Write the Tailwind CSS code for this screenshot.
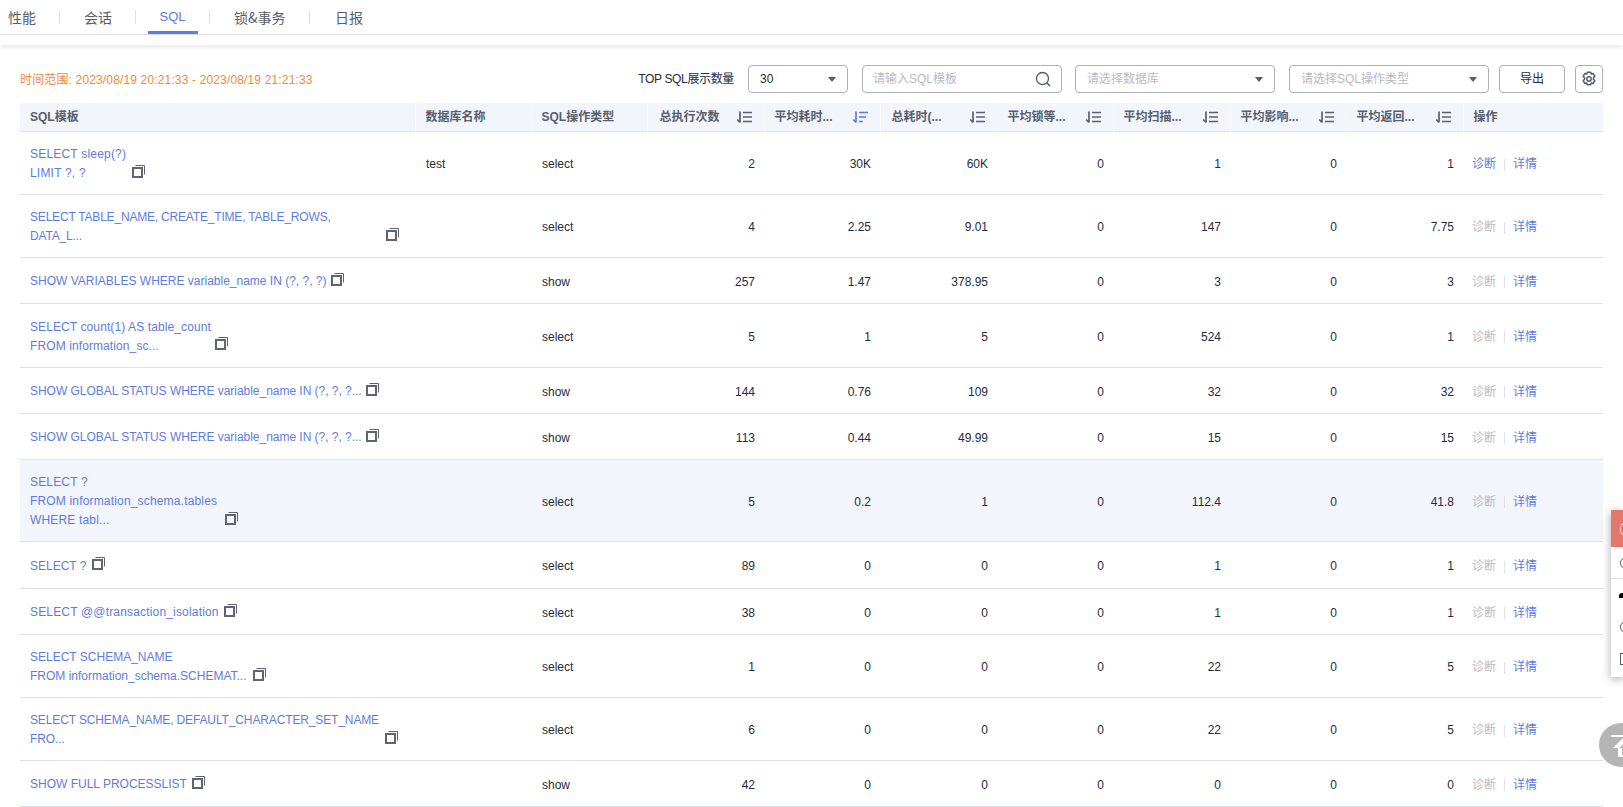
<!DOCTYPE html>
<html lang="zh">
<head>
<meta charset="utf-8">
<script src="https://cdn.jsdelivr.net/npm/@tailwindcss/browser@4"></script>
</head>
<body class="h-[807px] w-[1623px] overflow-hidden bg-white text-xs text-[#252b3a] font-['Liberation_Sans','Noto_Sans_CJK_SC',sans-serif]">
<svg class="hidden">
  <symbol id="sort" viewBox="0 0 16 12"><path d="M4 .5v11M1.200 8.500 4 11.300M7 1.500h9M7 6h9M7 10.500h9" fill="none" stroke="#5b6070" stroke-width="1.700"/></symbol>
  <symbol id="sort-on" viewBox="0 0 16 12"><path d="M4 .5v11M1.200 8.500 4 11.300M7 1.500h9M7 6h7M7 10.500h4" fill="none" stroke="#5e7ce0" stroke-width="1.700"/></symbol>
  <symbol id="copy" viewBox="0 0 14 14"><rect x="1" y="4" width="9" height="9" fill="none" stroke="#5f6470" stroke-width="2"/><path d="M3.500 1.500h9v9" fill="none" stroke="#5f6470" stroke-width="1"/></symbol>
</svg>

<nav class="flex h-[35px] items-center border-b border-[#dfe1e6] text-sm text-[#575d6c] font-['Noto_Sans_CJK_SC',sans-serif]">
  <a class="w-[59px] pl-2">性能</a><span class="h-[14px] w-px bg-[#dfe1e6]"></span>
  <a class="w-[75px] pl-6">会话</a><span class="h-[14px] w-px bg-[#dfe1e6]"></span>
  <a class="relative flex h-full w-[73px] items-center justify-center text-[13px] text-[#5e7ce0] font-['Liberation_Sans',sans-serif]">SQL<span class="absolute bottom-0 left-3 right-[11px] h-[3px] bg-[#5e7ce0]"></span></a><span class="h-[14px] w-px bg-[#dfe1e6]"></span>
  <a class="w-[99px] pl-6">锁&amp;事务</a><span class="h-[14px] w-px bg-[#dfe1e6]"></span>
  <a class="pl-[25px]">日报</a>
</nav>
<div class="h-[10px] bg-white shadow-[0_2px_4px_rgba(0,0,0,0.10)]"></div>

<main class="px-5 pt-5">
  <div class="flex h-[28px] items-center">
    <span class="translate-y-px tracking-[0.15px] text-[#f08a3c]">时间范围: 2023/08/19 20:21:33 - 2023/08/19 21:21:33</span>
    <span class="ml-auto mr-[14px] tracking-[-0.35px]">TOP SQL展示数量</span>
    <div class="mr-[14px] flex h-full w-[100px] items-center justify-between rounded-sm border border-[#adb0b8] pl-[11px] pr-[11px]">30<svg class="h-[5px] w-[8px]" viewBox="0 0 8 5"><path d="M0 0h8L4 5z" fill="#575d6c"/></svg></div>
    <div class="mr-[13px] flex h-full w-[200px] items-center justify-between rounded-sm border border-[#adb0b8] pl-[10px] pr-[10px] text-[#b8bac0]">请输入SQL模板<svg class="h-4 w-4" viewBox="0 0 16 16"><circle cx="7.500" cy="7.500" r="6" fill="none" stroke="#575d6c" stroke-width="1.300"/><path d="m12 12 3 3" stroke="#575d6c" stroke-width="1.500"/></svg></div>
    <div class="mr-[14px] flex h-full w-[200px] items-center justify-between rounded-sm border border-[#adb0b8] pl-[11px] pr-[11px] text-[#b8bac0]">请选择数据库<svg class="h-[5px] w-[8px]" viewBox="0 0 8 5"><path d="M0 0h8L4 5z" fill="#575d6c"/></svg></div>
    <div class="mr-[10px] flex h-full w-[200px] items-center justify-between rounded-sm border border-[#adb0b8] pl-[11px] pr-[11px] text-[#b8bac0]">请选择SQL操作类型<svg class="h-[5px] w-[8px]" viewBox="0 0 8 5"><path d="M0 0h8L4 5z" fill="#575d6c"/></svg></div>
    <button class="mr-[10px] flex h-full w-[66px] items-center justify-center rounded-sm border border-[#adb0b8]">导出</button>
    <button class="flex h-full w-[28px] items-center justify-center rounded-sm border border-[#adb0b8]"><svg class="h-4 w-4" viewBox="0 0 16 16" fill="none" stroke="#575d6c" stroke-width="1.500"><path d="M6.300 1.200h3.400l.5 1.800 1.900-.5 1.700 2.900-1.400 1.400v1.400l1.400 1.400-1.700 2.900-1.900-.5-.5 1.800H6.300l-.5-1.800-1.900.5-1.700-2.900 1.400-1.400V6.800L2.200 5.400l1.700-2.900 1.900.5z" stroke-linejoin="round"/><circle cx="8" cy="8" r="2.200"/></svg></button>
  </div>

  <table class="mt-[10px] w-[1583px] table-fixed">
    <colgroup>
      <col class="w-[395px]"><col class="w-[116px]"><col class="w-[116px]"><col class="w-[117px]"><col class="w-[116px]"><col class="w-[117px]"><col class="w-[116px]"><col class="w-[117px]"><col class="w-[116px]"><col class="w-[117px]"><col>
    </colgroup>
    <thead class="bg-[#f2f5fc] text-[#575d6c] [&_th]:pt-px">
      <tr class="h-[28px] border-b border-[#dfe1e6]">
        <th class="border-r border-white pl-[10px] text-left">SQL模板</th>
        <th class="border-r border-white pl-[10px] text-left">数据库名称</th>
        <th class="border-r border-white pl-[10px] text-left">SQL操作类型</th>
        <th class="border-r border-white pl-3 pr-3 text-left"><div class="flex items-center justify-between">总执行次数<svg class="h-3 w-4"><use href="#sort"/></svg></div></th>
        <th class="border-r border-white pl-[10px] pr-3 text-left"><div class="flex items-center justify-between">平均耗时...<svg class="h-3 w-4"><use href="#sort-on"/></svg></div></th>
        <th class="border-r border-white pl-[11px] pr-3 text-left"><div class="flex items-center justify-between">总耗时(...<svg class="h-3 w-4"><use href="#sort"/></svg></div></th>
        <th class="border-r border-white pl-[10px] pr-3 text-left"><div class="flex items-center justify-between">平均锁等...<svg class="h-3 w-4"><use href="#sort"/></svg></div></th>
        <th class="border-r border-white pl-[10px] pr-3 text-left"><div class="flex items-center justify-between">平均扫描...<svg class="h-3 w-4"><use href="#sort"/></svg></div></th>
        <th class="border-r border-white pl-[10px] pr-3 text-left"><div class="flex items-center justify-between">平均影响...<svg class="h-3 w-4"><use href="#sort"/></svg></div></th>
        <th class="border-r border-white pl-[10px] pr-3 text-left"><div class="flex items-center justify-between">平均返回...<svg class="h-3 w-4"><use href="#sort"/></svg></div></th>
        <th class="pl-[10px] text-left">操作</th>
      </tr>
    </thead>
    <tbody class="[&_td]:pr-[9px] [&_td]:pt-[3px] [&_td]:text-right">
      <tr class="h-[63px] border-b border-[#dfe1e6]">
        <td class="!text-left pl-[10px] leading-[19px] text-[#5e7ce0] tracking-[0.2px]">SELECT sleep(?)<br>LIMIT ?, ?<svg class="ml-[46px] inline-block h-[14px] w-[14px] -translate-y-[3px]"><use href="#copy"/></svg></td>
        <td class="!text-left pl-[11px]">test</td><td class="!text-left pl-[11px]">select</td>
        <td>2</td><td>30K</td><td>60K</td><td>0</td><td>1</td><td>0</td><td>1</td>
        <td class="!text-left pl-[9px]"><span class="text-[#5e7ce0]">诊断</span><span class="mx-2 inline-block h-[12px] w-px bg-[#dfe1e6] align-middle"></span><span class="text-[#5e7ce0]">详情</span></td>
      </tr>
      <tr class="h-[63px] border-b border-[#dfe1e6]">
        <td class="!text-left pl-[10px] leading-[19px] text-[#5e7ce0] tracking-[-0.19px]">SELECT TABLE_NAME, CREATE_TIME, TABLE_ROWS,<br>DATA_L...<svg class="ml-[304px] inline-block h-[14px] w-[14px] -translate-y-[3px]"><use href="#copy"/></svg></td>
        <td class="!text-left pl-[11px]"></td><td class="!text-left pl-[11px]">select</td>
        <td>4</td><td>2.25</td><td>9.01</td><td>0</td><td>147</td><td>0</td><td>7.75</td>
        <td class="!text-left pl-[9px]"><span class="text-[#bbbbbb]">诊断</span><span class="mx-2 inline-block h-[12px] w-px bg-[#dfe1e6] align-middle"></span><span class="text-[#5e7ce0]">详情</span></td>
      </tr>
      <tr class="h-[46px] border-b border-[#dfe1e6]">
        <td class="!text-left pl-[10px] leading-[19px] text-[#5e7ce0]">SHOW VARIABLES WHERE variable_name IN (?, ?, ?)<svg class="ml-[4px] inline-block h-[14px] w-[14px] -translate-y-[3px]"><use href="#copy"/></svg></td>
        <td class="!text-left pl-[11px]"></td><td class="!text-left pl-[11px]">show</td>
        <td>257</td><td>1.47</td><td>378.95</td><td>0</td><td>3</td><td>0</td><td>3</td>
        <td class="!text-left pl-[9px]"><span class="text-[#bbbbbb]">诊断</span><span class="mx-2 inline-block h-[12px] w-px bg-[#dfe1e6] align-middle"></span><span class="text-[#5e7ce0]">详情</span></td>
      </tr>
      <tr class="h-[64px] border-b border-[#dfe1e6]">
        <td class="!text-left pl-[10px] leading-[19px] text-[#5e7ce0] tracking-[0.1px]">SELECT count(1) AS table_count<br>FROM information_sc...<svg class="ml-[56px] inline-block h-[14px] w-[14px] -translate-y-[3px]"><use href="#copy"/></svg></td>
        <td class="!text-left pl-[11px]"></td><td class="!text-left pl-[11px]">select</td>
        <td>5</td><td>1</td><td>5</td><td>0</td><td>524</td><td>0</td><td>1</td>
        <td class="!text-left pl-[9px]"><span class="text-[#bbbbbb]">诊断</span><span class="mx-2 inline-block h-[12px] w-px bg-[#dfe1e6] align-middle"></span><span class="text-[#5e7ce0]">详情</span></td>
      </tr>
      <tr class="h-[46px] border-b border-[#dfe1e6]">
        <td class="!text-left pl-[10px] leading-[19px] text-[#5e7ce0] tracking-[-0.03px]">SHOW GLOBAL STATUS WHERE variable_name IN (?, ?, ?...<svg class="ml-[4px] inline-block h-[14px] w-[14px] -translate-y-[3px]"><use href="#copy"/></svg></td>
        <td class="!text-left pl-[11px]"></td><td class="!text-left pl-[11px]">show</td>
        <td>144</td><td>0.76</td><td>109</td><td>0</td><td>32</td><td>0</td><td>32</td>
        <td class="!text-left pl-[9px]"><span class="text-[#bbbbbb]">诊断</span><span class="mx-2 inline-block h-[12px] w-px bg-[#dfe1e6] align-middle"></span><span class="text-[#5e7ce0]">详情</span></td>
      </tr>
      <tr class="h-[46px] border-b border-[#dfe1e6]">
        <td class="!text-left pl-[10px] leading-[19px] text-[#5e7ce0] tracking-[-0.03px]">SHOW GLOBAL STATUS WHERE variable_name IN (?, ?, ?...<svg class="ml-[4px] inline-block h-[14px] w-[14px] -translate-y-[3px]"><use href="#copy"/></svg></td>
        <td class="!text-left pl-[11px]"></td><td class="!text-left pl-[11px]">show</td>
        <td>113</td><td>0.44</td><td>49.99</td><td>0</td><td>15</td><td>0</td><td>15</td>
        <td class="!text-left pl-[9px]"><span class="text-[#bbbbbb]">诊断</span><span class="mx-2 inline-block h-[12px] w-px bg-[#dfe1e6] align-middle"></span><span class="text-[#5e7ce0]">详情</span></td>
      </tr>
      <tr class="h-[82px] border-b border-[#dfe1e6] bg-[#f2f5fc]">
        <td class="!text-left pl-[10px] leading-[19px] text-[#5e7ce0] tracking-[0.17px]">SELECT ?<br>FROM information_schema.tables<br>WHERE tabl...<svg class="ml-[115px] inline-block h-[14px] w-[14px] -translate-y-[3px]"><use href="#copy"/></svg></td>
        <td class="!text-left pl-[11px]"></td><td class="!text-left pl-[11px]">select</td>
        <td>5</td><td>0.2</td><td>1</td><td>0</td><td>112.4</td><td>0</td><td>41.8</td>
        <td class="!text-left pl-[9px]"><span class="text-[#bbbbbb]">诊断</span><span class="mx-2 inline-block h-[12px] w-px bg-[#dfe1e6] align-middle"></span><span class="text-[#5e7ce0]">详情</span></td>
      </tr>
      <tr class="h-[47px] border-b border-[#dfe1e6]">
        <td class="!text-left pl-[10px] leading-[19px] text-[#5e7ce0]">SELECT ?<svg class="ml-[6px] inline-block h-[14px] w-[14px] -translate-y-[3px]"><use href="#copy"/></svg></td>
        <td class="!text-left pl-[11px]"></td><td class="!text-left pl-[11px]">select</td>
        <td>89</td><td>0</td><td>0</td><td>0</td><td>1</td><td>0</td><td>1</td>
        <td class="!text-left pl-[9px]"><span class="text-[#bbbbbb]">诊断</span><span class="mx-2 inline-block h-[12px] w-px bg-[#dfe1e6] align-middle"></span><span class="text-[#5e7ce0]">详情</span></td>
      </tr>
      <tr class="h-[46px] border-b border-[#dfe1e6]">
        <td class="!text-left pl-[10px] leading-[19px] text-[#5e7ce0] tracking-[0.17px]">SELECT @@transaction_isolation<svg class="ml-[5px] inline-block h-[14px] w-[14px] -translate-y-[3px]"><use href="#copy"/></svg></td>
        <td class="!text-left pl-[11px]"></td><td class="!text-left pl-[11px]">select</td>
        <td>38</td><td>0</td><td>0</td><td>0</td><td>1</td><td>0</td><td>1</td>
        <td class="!text-left pl-[9px]"><span class="text-[#bbbbbb]">诊断</span><span class="mx-2 inline-block h-[12px] w-px bg-[#dfe1e6] align-middle"></span><span class="text-[#5e7ce0]">详情</span></td>
      </tr>
      <tr class="h-[63px] border-b border-[#dfe1e6]">
        <td class="!text-left pl-[10px] leading-[19px] text-[#5e7ce0]">SELECT SCHEMA_NAME<br>FROM information_schema.SCHEMAT...<svg class="ml-[6px] inline-block h-[14px] w-[14px] -translate-y-[3px]"><use href="#copy"/></svg></td>
        <td class="!text-left pl-[11px]"></td><td class="!text-left pl-[11px]">select</td>
        <td>1</td><td>0</td><td>0</td><td>0</td><td>22</td><td>0</td><td>5</td>
        <td class="!text-left pl-[9px]"><span class="text-[#bbbbbb]">诊断</span><span class="mx-2 inline-block h-[12px] w-px bg-[#dfe1e6] align-middle"></span><span class="text-[#5e7ce0]">详情</span></td>
      </tr>
      <tr class="h-[63px] border-b border-[#dfe1e6]">
        <td class="!text-left pl-[10px] leading-[19px] text-[#5e7ce0] tracking-[-0.13px]">SELECT SCHEMA_NAME, DEFAULT_CHARACTER_SET_NAME<br>FRO...<svg class="ml-[320px] inline-block h-[14px] w-[14px] -translate-y-[3px]"><use href="#copy"/></svg></td>
        <td class="!text-left pl-[11px]"></td><td class="!text-left pl-[11px]">select</td>
        <td>6</td><td>0</td><td>0</td><td>0</td><td>22</td><td>0</td><td>5</td>
        <td class="!text-left pl-[9px]"><span class="text-[#bbbbbb]">诊断</span><span class="mx-2 inline-block h-[12px] w-px bg-[#dfe1e6] align-middle"></span><span class="text-[#5e7ce0]">详情</span></td>
      </tr>
      <tr class="h-[46px] border-b border-[#dfe1e6]">
        <td class="!text-left pl-[10px] leading-[19px] text-[#5e7ce0]">SHOW FULL PROCESSLIST<svg class="ml-[5px] inline-block h-[14px] w-[14px] -translate-y-[3px]"><use href="#copy"/></svg></td>
        <td class="!text-left pl-[11px]"></td><td class="!text-left pl-[11px]">show</td>
        <td>42</td><td>0</td><td>0</td><td>0</td><td>0</td><td>0</td><td>0</td>
        <td class="!text-left pl-[9px]"><span class="text-[#bbbbbb]">诊断</span><span class="mx-2 inline-block h-[12px] w-px bg-[#dfe1e6] align-middle"></span><span class="text-[#5e7ce0]">详情</span></td>
      </tr>
    </tbody>
  </table>
</main>

<aside class="absolute left-[1611px] top-[510px] h-[167px] w-[12px] overflow-hidden bg-white shadow-[0_2px_10px_rgba(0,0,0,0.35)]">
  <div class="flex h-[37px] items-center bg-[#e5766d] pl-[9px]"><span class="h-3 w-3 shrink-0 rounded-sm border border-white/70"></span></div>
  <div class="flex h-[32px] items-center border-b border-[#dfe1e6] pl-[9px]"><span class="h-3 w-3 shrink-0 rounded-full border border-[#575d6c]"></span></div>
  <div class="flex h-[32px] items-center pl-[8px]"><span class="h-[5px] w-[6px] shrink-0 rounded-t-full bg-black"></span></div>
  <div class="flex h-[32px] items-center pl-[9px]"><span class="h-3 w-3 shrink-0 rounded-full border border-[#575d6c]"></span></div>
  <div class="flex h-[32px] items-center pl-[9px]"><span class="h-3 w-3 shrink-0 border border-[#575d6c]"></span></div>
</aside>
<div class="absolute left-[1599px] top-[723px] flex h-[44px] w-[44px] items-start rounded-full bg-[#b5b5b5] pl-3">
  <svg class="mt-3 h-[24px] w-[24px] shrink-0" viewBox="0 0 24 24"><path d="M0 0h24v2H0zM12 3 2 13h5v9h10v-9h5z" fill="#fff"/><path d="M12 9l-3.500 4H11v7h2v-7h2.500z" fill="#b5b5b5"/></svg>
</div>
</body>
</html>
